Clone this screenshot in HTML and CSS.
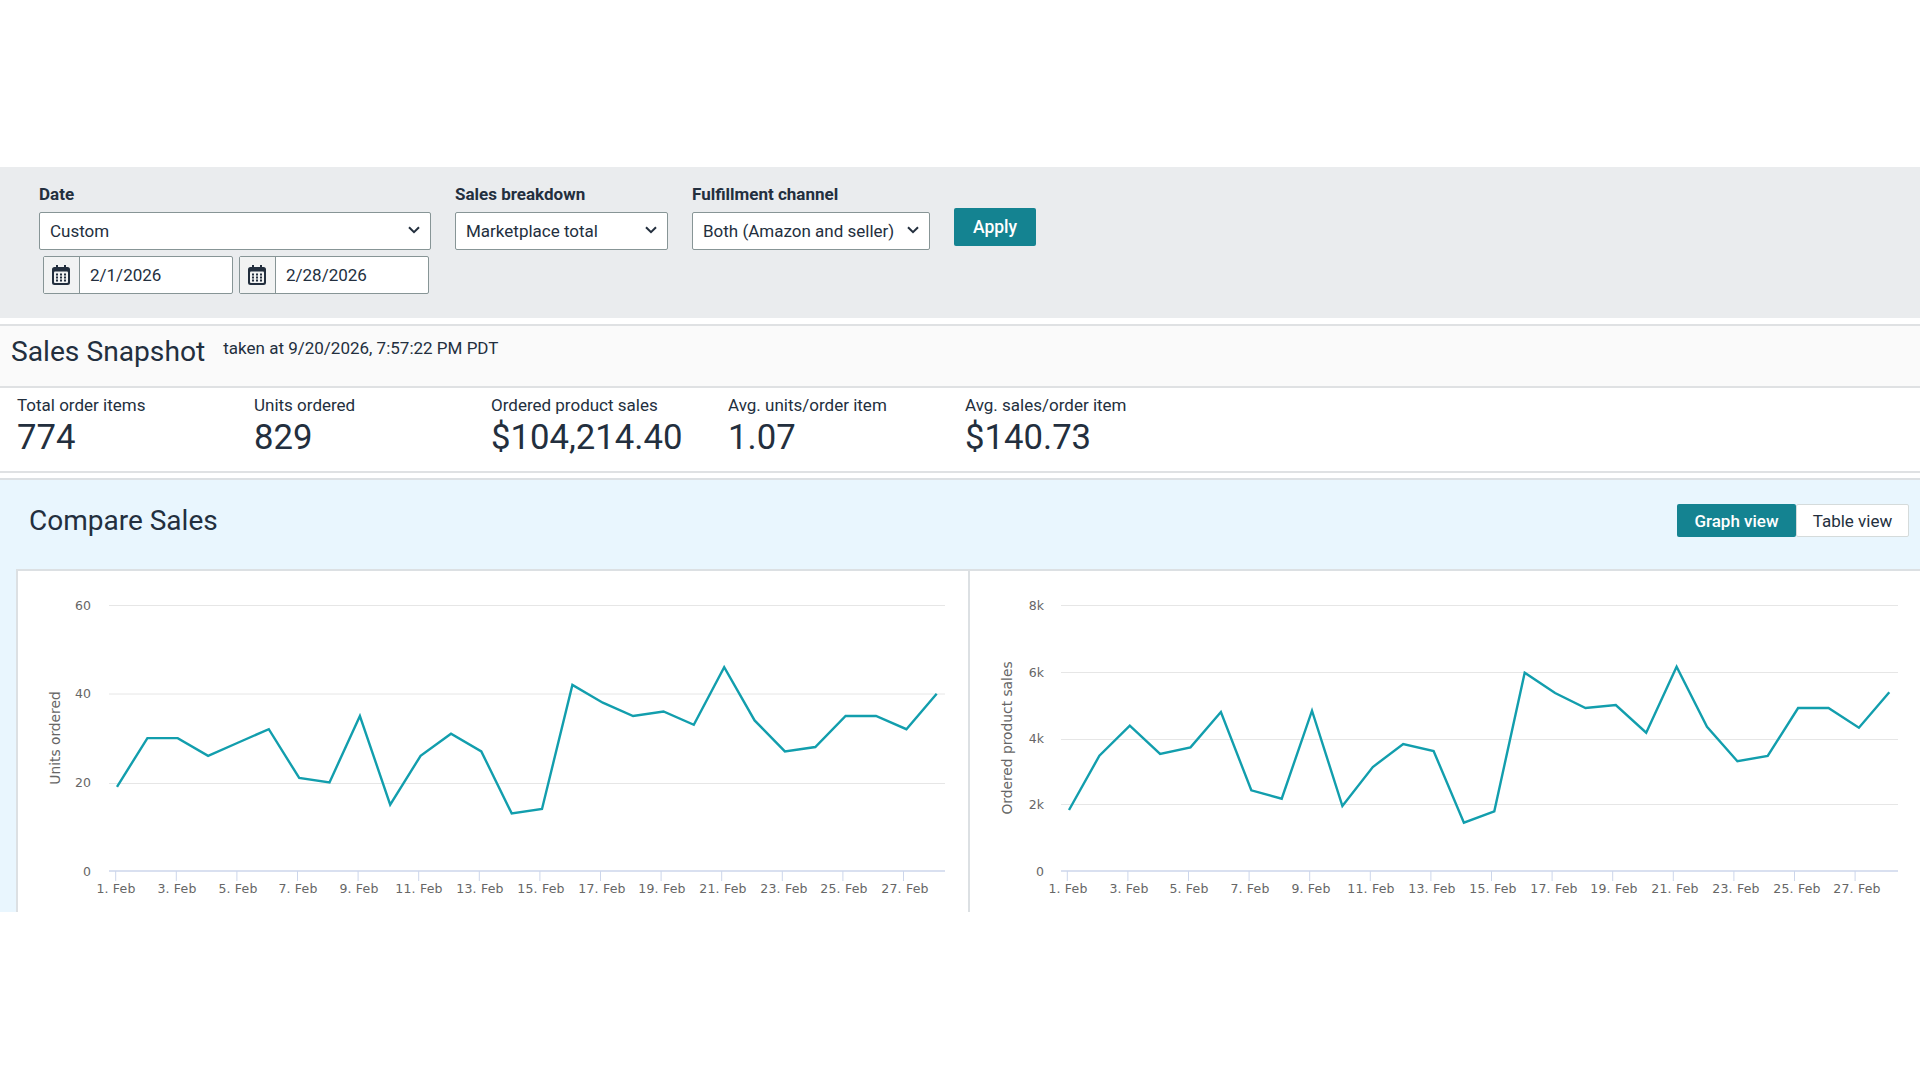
FILE: index.html
```html
<!DOCTYPE html>
<html>
<head>
  <title>Sales Dashboard</title>
  <link rel="stylesheet" href="styles.css">
</head>
<body>
  <svg class="icon-defs" width="0" height="0">
    <defs>
      <symbol id="calendar" viewBox="0 0 18 20">
        <path d="M4 0h2v2h6V0h2v2h1.5A2.5 2.5 0 0 1 18 4.5v13a2.5 2.5 0 0 1-2.5 2.5h-13A2.5 2.5 0 0 1 0 17.5v-13A2.5 2.5 0 0 1 2.5 2H4z" fill="#232f3e"/>
        <rect x="2" y="6.5" width="14" height="11.5" rx="1" fill="#f2f3f3"/>
        <g fill="#232f3e">
          <rect x="4" y="8.5" width="2" height="2"/><rect x="8" y="8.5" width="2" height="2"/><rect x="12" y="8.5" width="2" height="2"/>
          <rect x="4" y="11.5" width="2" height="2"/><rect x="8" y="11.5" width="2" height="2"/><rect x="12" y="11.5" width="2" height="2"/>
          <rect x="4" y="14.5" width="2" height="2"/><rect x="8" y="14.5" width="2" height="2"/><rect x="12" y="14.5" width="2" height="2"/>
        </g>
      </symbol>
      <symbol id="chevron" viewBox="0 0 12 8">
        <path d="M1 1.2l5 5 5-5" fill="none" stroke="#232f3e" stroke-width="2"/>
      </symbol>
    </defs>
  </svg>

  <div class="filters">
    <div class="filter-group date-group">
      <label>Date</label>
      <div class="select">Custom<svg class="chevron"><use href="#chevron"/></svg></div>
      <div class="date-row">
        <div class="date-input">
          <span class="date-icon"><svg class="calendar"><use href="#calendar"/></svg></span>
          <span class="date-value">2/1/2026</span>
        </div>
        <div class="date-input">
          <span class="date-icon"><svg class="calendar"><use href="#calendar"/></svg></span>
          <span class="date-value">2/28/2026</span>
        </div>
      </div>
    </div>
    <div class="filter-group breakdown-group">
      <label>Sales breakdown</label>
      <div class="select">Marketplace total<svg class="chevron"><use href="#chevron"/></svg></div>
    </div>
    <div class="filter-group channel-group">
      <label>Fulfillment channel</label>
      <div class="select">Both (Amazon and seller)<svg class="chevron"><use href="#chevron"/></svg></div>
    </div>
    <button class="apply-button">Apply</button>
  </div>

  <div class="snapshot-head">
    <h2>Sales Snapshot</h2>
    <span class="taken-at">taken at 9/20/2026, 7:57:22 PM PDT</span>
  </div>

  <div class="stats">
    <div class="stat"><div class="stat-label">Total order items</div><div class="stat-value">774</div></div>
    <div class="stat"><div class="stat-label">Units ordered</div><div class="stat-value">829</div></div>
    <div class="stat"><div class="stat-label">Ordered product sales</div><div class="stat-value">$104,214.40</div></div>
    <div class="stat"><div class="stat-label">Avg. units/order item</div><div class="stat-value">1.07</div></div>
    <div class="stat"><div class="stat-label">Avg. sales/order item</div><div class="stat-value">$140.73</div></div>
  </div>

  <div class="compare">
    <div class="compare-head">
      <h2>Compare Sales</h2>
      <div class="view-toggle">
        <button class="toggle-on">Graph view</button>
        <button class="toggle-off">Table view</button>
      </div>
    </div>
    <div class="charts">
      <div class="chart chart-units">
        <svg class="chart-svg" width="949" height="341">
          <g class="grid">
            <line x1="90" x2="926" y1="34.5" y2="34.5"/>
            <line x1="90" x2="926" y1="123" y2="123"/>
            <line x1="90" x2="926" y1="212.5" y2="212.5"/>
          </g>
          <line class="axis" x1="90" x2="926" y1="300" y2="300"/>
          <path class="ticks" d="M96.7 300v10M157.3 300v10M217.9 300v10M278.5 300v10M339.1 300v10M399.7 300v10M460.3 300v10M520.9 300v10M581.5 300v10M642.1 300v10M702.7 300v10M763.3 300v10M823.9 300v10M884.5 300v10"/>
          <g class="y-labels">
            <text x="72" y="39">60</text>
            <text x="72" y="127">40</text>
            <text x="72" y="216">20</text>
            <text x="72" y="305">0</text>
          </g>
          <text class="y-title" transform="translate(41 167) rotate(-90)">Units ordered</text>
          <g class="x-labels">
            <text x="97" y="322">1. Feb</text><text x="158" y="322">3. Feb</text><text x="219" y="322">5. Feb</text><text x="279" y="322">7. Feb</text><text x="340" y="322">9. Feb</text><text x="400" y="322">11. Feb</text><text x="461" y="322">13. Feb</text><text x="522" y="322">15. Feb</text><text x="583" y="322">17. Feb</text><text x="643" y="322">19. Feb</text><text x="704" y="322">21. Feb</text><text x="765" y="322">23. Feb</text><text x="825" y="322">25. Feb</text><text x="886" y="322">27. Feb</text>
          </g>
          <polyline class="series" points="98,215.8 128.4,167.1 158.7,167.1 189.1,184.8 219.4,171.5 249.8,158.2 280.2,207 310.5,211.4 340.9,145 371.2,233.6 401.6,184.8 432,162.7 462.3,180.4 492.7,242.4 523,238 553.4,113.9 583.8,131.7 614.1,145 644.5,140.5 674.8,153.8 705.2,96.2 735.6,149.4 765.9,180.4 796.3,176 826.6,145 857,145 887.4,158.2 917.7,122.8"/>
        </svg>
      </div>
      <div class="chart chart-sales">
        <svg class="chart-svg" width="950" height="341">
          <g class="grid">
            <line x1="91" x2="928" y1="34.5" y2="34.5"/>
            <line x1="91" x2="928" y1="101.5" y2="101.5"/>
            <line x1="91" x2="928" y1="168.5" y2="168.5"/>
            <line x1="91" x2="928" y1="233.5" y2="233.5"/>
          </g>
          <line class="axis" x1="91" x2="928" y1="300" y2="300"/>
          <path class="ticks" d="M97.3 300v10M157.9 300v10M218.5 300v10M279.1 300v10M339.7 300v10M400.3 300v10M460.9 300v10M521.5 300v10M582.1 300v10M642.7 300v10M703.3 300v10M763.9 300v10M824.5 300v10M885.1 300v10"/>
          <g class="y-labels">
            <text x="74" y="39">8k</text>
            <text x="74" y="106">6k</text>
            <text x="74" y="172">4k</text>
            <text x="74" y="238">2k</text>
            <text x="74" y="305">0</text>
          </g>
          <text class="y-title" transform="translate(42 167) rotate(-90)">Ordered product sales</text>
          <g class="x-labels">
            <text x="98" y="322">1. Feb</text><text x="159" y="322">3. Feb</text><text x="219" y="322">5. Feb</text><text x="280" y="322">7. Feb</text><text x="341" y="322">9. Feb</text><text x="401" y="322">11. Feb</text><text x="462" y="322">13. Feb</text><text x="523" y="322">15. Feb</text><text x="584" y="322">17. Feb</text><text x="644" y="322">19. Feb</text><text x="705" y="322">21. Feb</text><text x="766" y="322">23. Feb</text><text x="827" y="322">25. Feb</text><text x="887" y="322">27. Feb</text>
          </g>
          <polyline class="series" points="99,239 129.4,184.7 159.8,154.7 190.1,183 220.5,176.3 250.9,141 281.3,219.3 311.7,227.7 342,139.7 372.4,235 402.8,196 433.2,173 463.6,180 493.9,251.7 524.3,240.3 554.7,101.7 585.1,122 615.5,137 645.8,134 676.2,161.7 706.6,95.7 737,155.7 767.4,190.3 797.7,185 828.1,137 858.5,137 888.9,156.7 919.3,121.3"/>
        </svg>
      </div>
    </div>
  </div>
</body>
</html>
```

FILE: styles.css
```css
body {
  margin: 0;
  padding: 167px 0 0;
  font-family: Roboto, "Noto Sans", sans-serif;
  color: #232f3e;
  background-color: #ffffff;
}

h2 {
  margin: 0;
  font-weight: 400;
}

.icon-defs {
  position: absolute;
}

.filters {
  display: flex;
  gap: 24px;
  height: 151px;
  box-sizing: border-box;
  padding: 17px 0 0 39px;
  background-color: #eaecee;
}

.filter-group label {
  display: block;
  height: 20px;
  margin-bottom: 8px;
  font-size: 17px;
  line-height: 20px;
  font-weight: 700;
}

.date-group {
  width: 392px;
}

.breakdown-group {
  width: 213px;
}

.channel-group {
  width: 238px;
}

.select {
  display: flex;
  align-items: center;
  justify-content: space-between;
  height: 38px;
  box-sizing: border-box;
  padding: 0 10px;
  font-size: 17px;
  background-color: #ffffff;
  border: 1px solid #879596;
  border-radius: 2px;
}

.chevron {
  width: 12px;
  height: 8px;
  margin-top: -2px;
}

.date-row {
  display: flex;
  gap: 6px;
  margin: 6px 0 0 4px;
}

.date-input {
  display: flex;
  align-items: center;
  width: 190px;
  height: 38px;
  box-sizing: border-box;
  font-size: 17px;
  background-color: #ffffff;
  border: 1px solid #879596;
  border-radius: 2px;
}

.date-icon {
  display: flex;
  align-items: center;
  justify-content: center;
  width: 36px;
  height: 100%;
  padding-right: 2px;
  box-sizing: border-box;
  background-color: #f2f3f3;
  border-right: 1px solid #879596;
}

.calendar {
  width: 18px;
  height: 20px;
}

.date-value {
  padding-left: 10px;
}

.apply-button {
  width: 82px;
  height: 38px;
  margin-top: 24px;
  padding: 0;
  font-family: inherit;
  font-size: 17.5px;
  font-weight: 500;
  color: #ffffff;
  background-color: #148391;
  border: none;
  border-radius: 2px;
}

.snapshot-head {
  display: flex;
  align-items: flex-start;
  height: 52px;
  margin-top: 6px;
  padding: 8px 0 0 11px;
  background-color: #fafafa;
  border-top: 2px solid #dfe1e3;
  border-bottom: 2px solid #dfe1e3;
}

.snapshot-head h2 {
  font-size: 28.2px;
  line-height: 36px;
}

.taken-at {
  margin: 4px 0 0 18px;
  font-size: 17px;
  line-height: 20px;
}

.stats {
  display: flex;
  height: 76px;
  padding: 7px 0 0 17px;
  border-bottom: 2px solid #dfe1e3;
}

.stat {
  width: 237px;
}

.stat-label {
  font-size: 17px;
  line-height: 20px;
}

.stat-value {
  margin-top: 2px;
  font-size: 34.7px;
  line-height: 40px;
}

.compare {
  margin-top: 5px;
  background-color: #e9f6fe;
  border-top: 2px solid #dce0e3;
}

.compare-head {
  display: flex;
  align-items: flex-start;
  justify-content: space-between;
  height: 68px;
  padding: 21px 11px 0 29px;
}

.compare-head h2 {
  font-size: 28px;
  line-height: 40px;
}

.view-toggle {
  display: flex;
  margin-top: 3px;
}

.view-toggle button {
  height: 33px;
  padding: 0;
  font-family: inherit;
  font-size: 17px;
  border-radius: 2px;
}

.toggle-on {
  width: 119px;
  font-weight: 500;
  color: #ffffff;
  background-color: #148391;
  border: none;
}

.toggle-off {
  width: 113px;
  color: #232f3e;
  background-color: #ffffff;
  border: 1px solid #d5dbdb;
}

.charts {
  display: flex;
  margin-left: 16px;
  background-color: #ffffff;
  border-top: 2px solid #dce0e3;
  border-left: 2px solid #dce0e3;
}

.chart {
  height: 341px;
}

.chart-units {
  width: 949px;
  padding-left: 1px;
  border-right: 2px solid #dce0e3;
}

.chart-sales {
  flex: 1;
}

.chart-svg {
  display: block;
  font-family: "DejaVu Sans", sans-serif;
  font-size: 12.5px;
  fill: #666666;
}

.grid line {
  stroke: #e6e6e6;
  stroke-width: 1;
}

.axis {
  stroke: #ccd6eb;
  stroke-width: 1.5;
}

.ticks {
  stroke: #ccd6eb;
  stroke-width: 1;
  fill: none;
}

.y-labels text {
  text-anchor: end;
}

.x-labels text {
  letter-spacing: 0.2px;
  text-anchor: middle;
}

.y-title {
  font-size: 13.8px;
  text-anchor: middle;
}

.series {
  fill: none;
  stroke: #129ead;
  stroke-width: 2.4;
}
```
